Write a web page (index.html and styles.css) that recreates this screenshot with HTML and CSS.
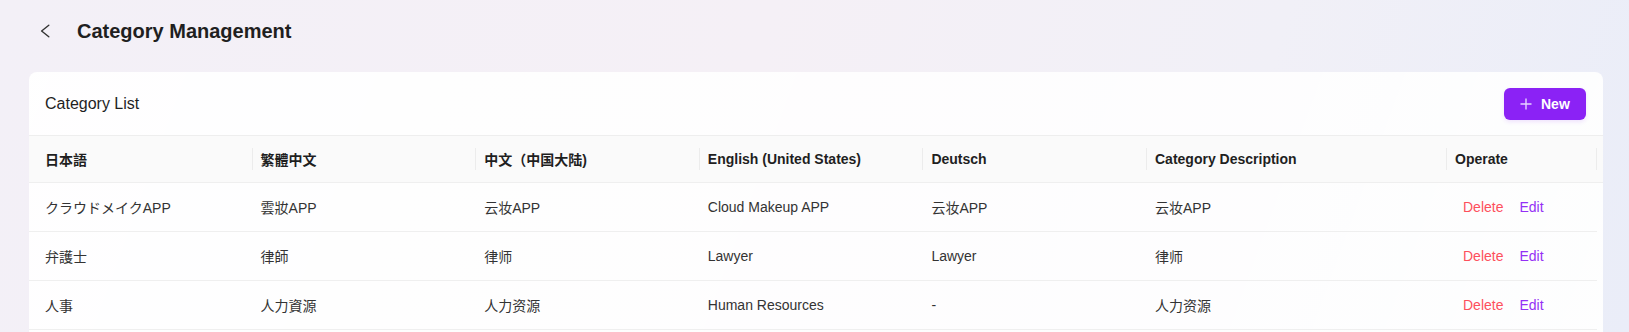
FILE: index.html
```html
<!DOCTYPE html>
<html lang="en">
<head>
<meta charset="utf-8">
<title>Category Management</title>
<link rel="stylesheet" href="styles.css">
</head>
<body>
<div class="page">
  <header class="topbar">
    <button class="back" aria-label="Back">
      <svg width="10" height="14" viewBox="0 0 10 14"><path d="M8.8 1.2 L1.6 7 L8.8 12.8" fill="none" stroke="#333" stroke-width="1.4" stroke-linecap="round" stroke-linejoin="round"/></svg>
    </button>
    <h1 class="title">Category Management</h1>
  </header>

  <section class="card">
    <div class="card-head">
      <div class="card-title">Category List</div>
      <button class="btn-new">
        <svg width="12" height="12" viewBox="0 0 12 12"><path d="M6 0.5 V11.5 M0.5 6 H11.5" stroke="#e6d2ff" stroke-width="1.4" fill="none"/></svg>
        <span>New</span>
      </button>
    </div>

    <div class="table">
      <div class="thead">
        <div class="th">日本語</div>
        <div class="th">繁體中文</div>
        <div class="th">中文（中国大陆)</div>
        <div class="th">English (United States)</div>
        <div class="th">Deutsch</div>
        <div class="th">Category Description</div>
        <div class="th">Operate</div>
        <div class="th gutter"></div>
      </div>
      <div class="tbody">
        <div class="tr">
          <div class="td jp">クラウドメイクAPP</div>
          <div class="td tc">雲妝APP</div>
          <div class="td">云妆APP</div>
          <div class="td">Cloud Makeup APP</div>
          <div class="td">云妆APP</div>
          <div class="td">云妆APP</div>
          <div class="td ops"><a class="link del">Delete</a><a class="link edit">Edit</a></div>
        </div>
        <div class="tr">
          <div class="td jp">弁護士</div>
          <div class="td tc">律師</div>
          <div class="td">律师</div>
          <div class="td">Lawyer</div>
          <div class="td">Lawyer</div>
          <div class="td">律师</div>
          <div class="td ops"><a class="link del">Delete</a><a class="link edit">Edit</a></div>
        </div>
        <div class="tr">
          <div class="td jp">人事</div>
          <div class="td tc">人力資源</div>
          <div class="td">人力资源</div>
          <div class="td">Human Resources</div>
          <div class="td">-</div>
          <div class="td">人力资源</div>
          <div class="td ops"><a class="link del">Delete</a><a class="link edit">Edit</a></div>
        </div>
      </div>
    </div>
  </section>
</div>
</body>
</html>
```

FILE: styles.css
```css
* { box-sizing: border-box; }

html, body {
  margin: 0;
  height: 100%;
}

body {
  font-family: "Liberation Sans", "Noto Sans CJK SC", sans-serif;
  font-size: 14px;
  color: #333;
  background: linear-gradient(105deg, #f3f0f7 0%, #f5f0f6 45%, #f1f0f7 75%, #eaedf8 100%);
  overflow: hidden;
}

.page {
  padding: 0 26px 0 29px;
}

.topbar {
  height: 62px;
  display: flex;
  align-items: center;
  padding-left: 10px;
}

.back {
  width: 12px;
  height: 16px;
  padding: 0;
  margin: 0;
  border: 0;
  background: none;
  display: flex;
  align-items: center;
  justify-content: center;
  cursor: pointer;
}

.title {
  margin: 0 0 0 26px;
  font-size: 20px;
  font-weight: 700;
  color: #1f1f1f;
  line-height: 28px;
}

.card {
  margin-top: 10px;
  padding-bottom: 40px;
  background: linear-gradient(110deg, rgba(255,255,255,0.97), rgba(255,255,255,0.88) 60%, rgba(255,255,255,0.93));
  border-radius: 8px;
  overflow: hidden;
}

.card-head {
  height: 64px;
  display: flex;
  align-items: center;
  justify-content: space-between;
  padding: 0 17px 0 16px;
  border-bottom: 1px solid #eeeeee;
}

.card-title {
  font-size: 16px;
  color: #1f1f1f;
}

.btn-new {
  height: 32px;
  width: 82px;
  padding: 0 16px;
  border: 0;
  border-radius: 6px;
  background: #8b22f5;
  color: #fff;
  font-family: "Liberation Sans", sans-serif;
  font-size: 14px;
  font-weight: 700;
  display: flex;
  align-items: center;
  gap: 9px;
  box-shadow: 0 2px 4px rgba(139, 34, 245, 0.12);
  cursor: pointer;
}

.table {
  width: 100%;
}

.thead {
  display: grid;
  grid-template-columns: repeat(5, 1fr) 300px 150px 6px;
  background: #fafafa;
  border-bottom: 1px solid #efefef;
}

.th {
  position: relative;
  height: 46px;
  display: flex;
  align-items: center;
  padding: 0 8px;
  font-weight: 700;
  color: #1f1f1f;
  white-space: nowrap;
}

.th:first-child { padding-left: 16px; }

.th:not(.gutter)::after {
  content: "";
  position: absolute;
  right: 0;
  top: 12px;
  width: 1px;
  height: 22px;
  background: #ececec;
}

.th.gutter { padding: 0; background: #fafafa; }

.tbody {
  width: calc(100% - 6px);
}

.tr {
  display: grid;
  grid-template-columns: repeat(5, 1fr) 300px 150px;
  border-bottom: 1px solid #efefef;
}

.td {
  height: 48px;
  display: flex;
  align-items: center;
  padding: 0 8px;
  color: #333;
  white-space: nowrap;
}

.td:first-child { padding-left: 16px; }

.td.jp { font-family: "Liberation Sans", "Noto Sans CJK JP", sans-serif; }
.td.tc { font-family: "Liberation Sans", "Noto Sans CJK TC", sans-serif; }

.ops { gap: 0; }

.link {
  padding: 4px 8px;
  cursor: pointer;
}

.link.del { color: #fd4f5c; }
.link.edit { color: #9430f5; }
```
